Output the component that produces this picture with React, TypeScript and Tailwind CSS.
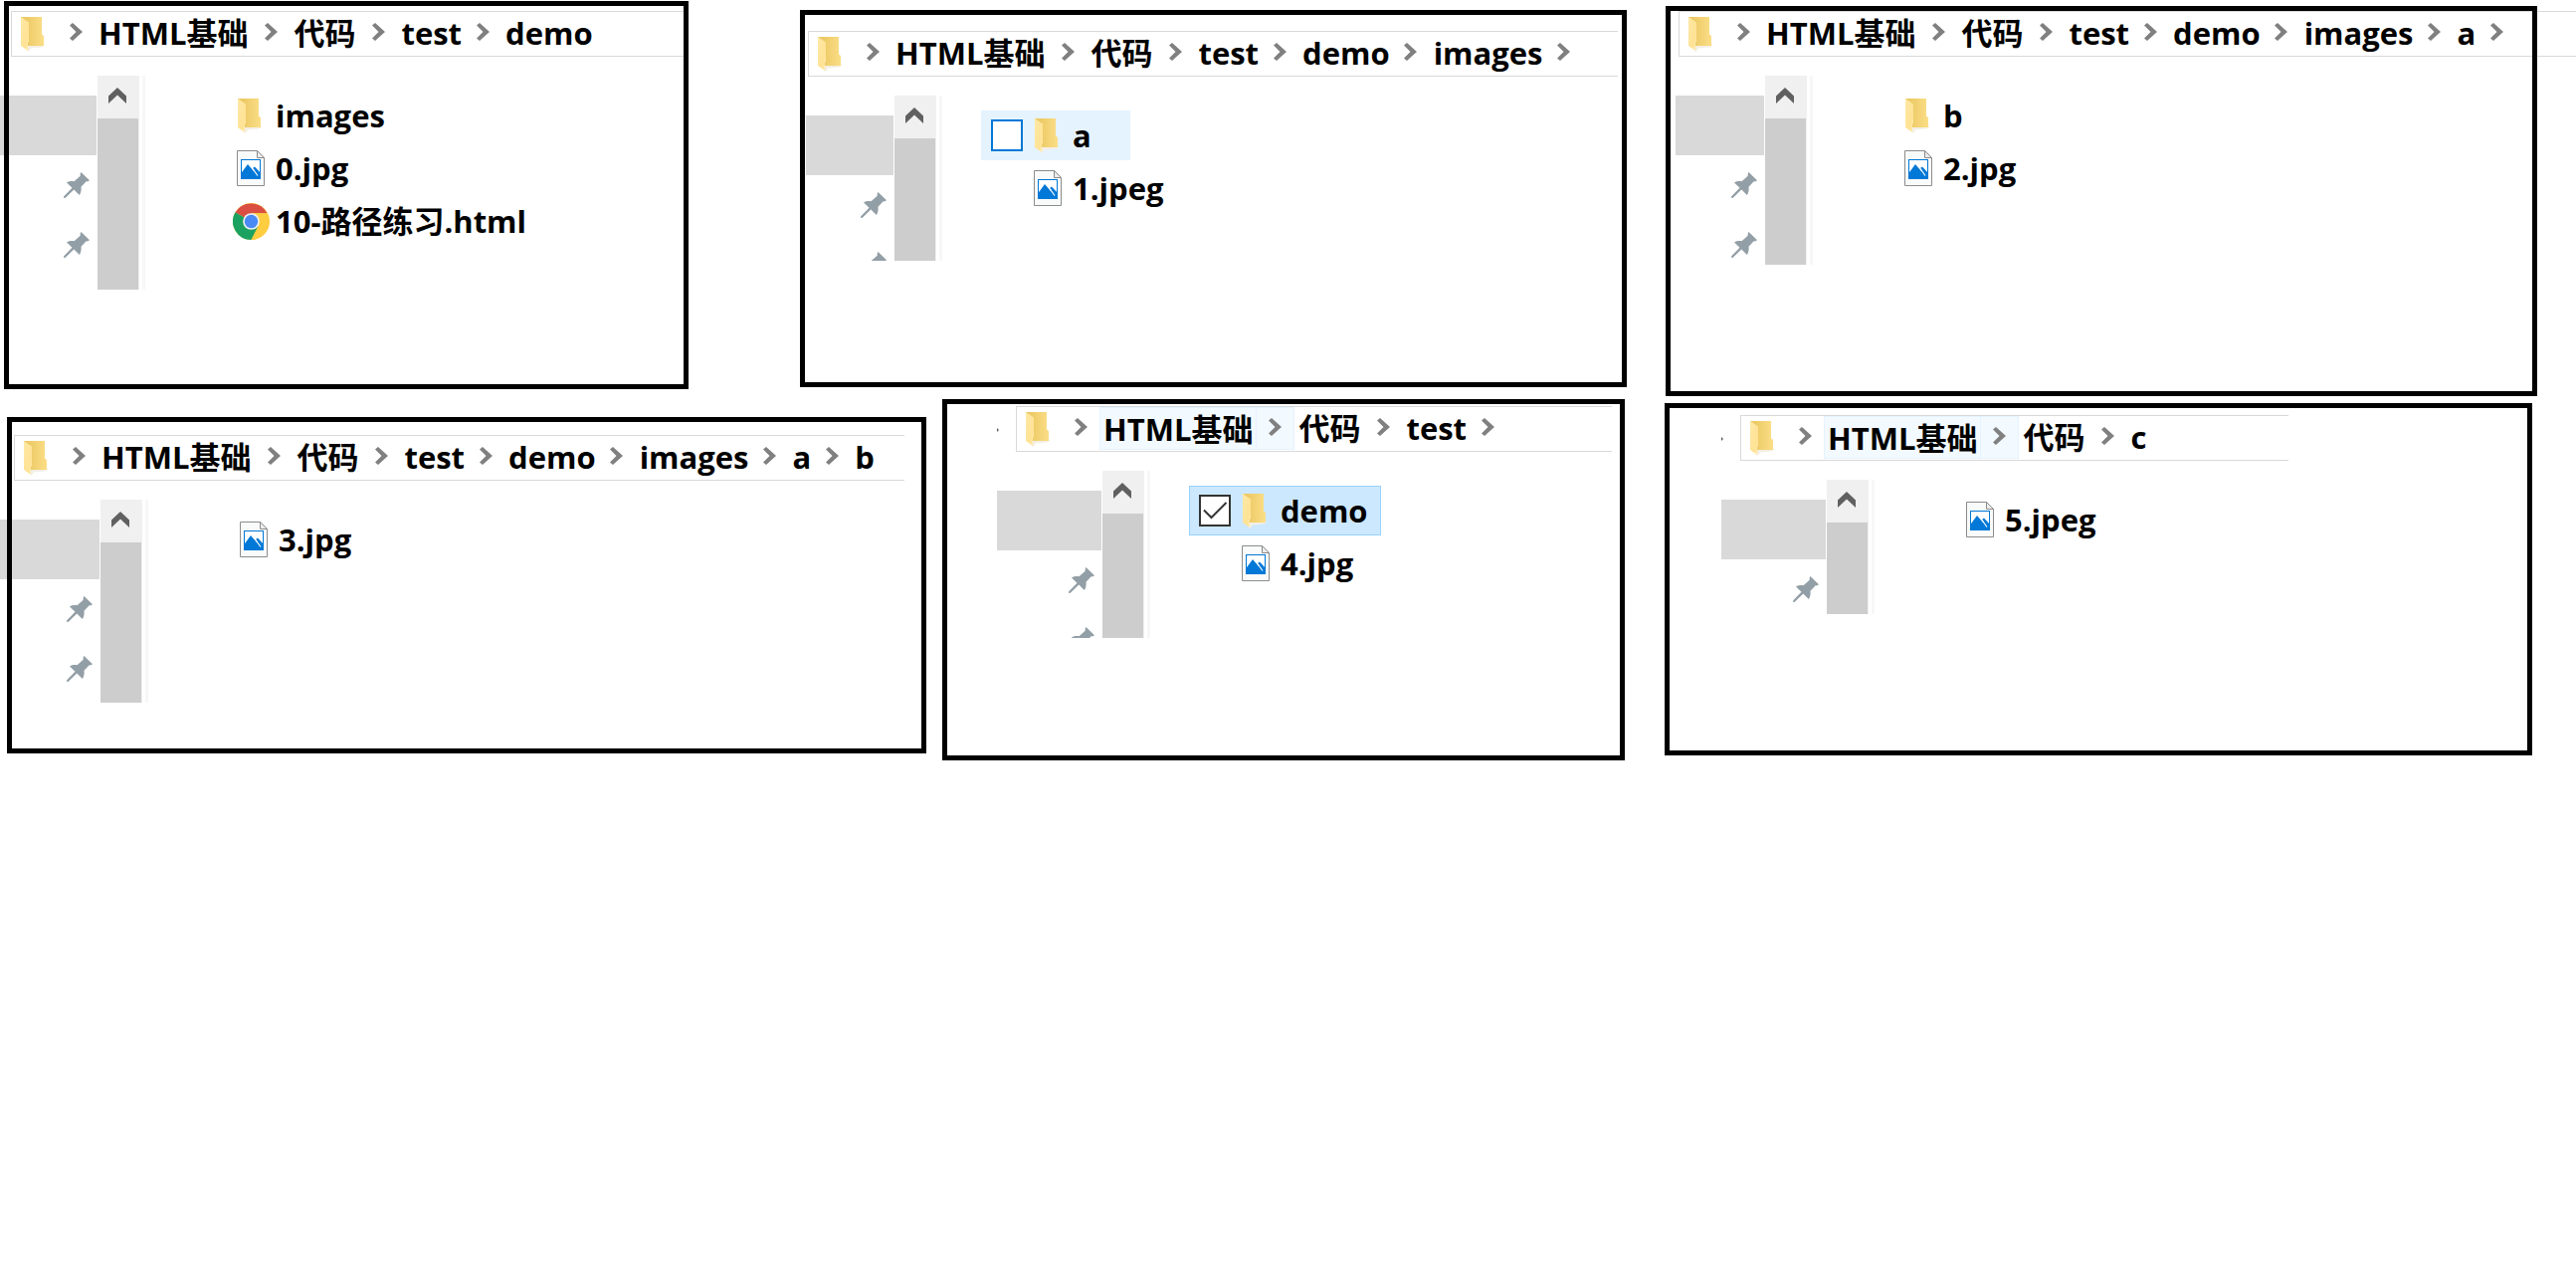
import React from "react";

const FONT =
  "font-['Open_Sans','Noto_Sans_CJK_SC',sans-serif] font-bold text-[31px] leading-[42px] text-black whitespace-nowrap";

type FileKind = "folder" | "image" | "chrome";
type Entry = { name: string; kind: FileKind; state?: "hover" | "selected" };

function FolderIcon() {
  return (
    <svg width="28" height="35" viewBox="-1 0 28 35" className="shrink-0">
      <defs>
        <linearGradient id="folderBack" x1="0" x2="1" y1="0" y2="0">
          <stop offset="0.2" stopColor="#ecc964" />
          <stop offset="1" stopColor="#fbde87" />
        </linearGradient>
        <linearGradient id="folderFlap" x1="0" x2="1" y1="0" y2="1">
          <stop offset="0" stopColor="#ffe9a6" />
          <stop offset="0.7" stopColor="#ffe294" />
          <stop offset="1" stopColor="#fff0bf" />
        </linearGradient>
      </defs>
      <path d="M7 28h18l-4 2.500-11 1-2 3H6z" fill="#f3efe4" />
      <path d="M0 0h21v17.500l2 1.500v10H7L0 20z" fill="url(#folderBack)" />
      <path d="M0 0l8 5.500v19.500l-1 .5v8.500L0 29z" fill="url(#folderFlap)" />
    </svg>
  );
}

function ImageIcon() {
  return (
    <svg width="28" height="36" viewBox="0 0 28 36" className="shrink-0">
      <path d="M.5.500h20l7 7v28H.5z" fill="#f9fafa" stroke="#8c8c8c" />
      <path d="M20.500.500v7h7z" fill="#ececec" stroke="#8c8c8c" />
      <rect x="4.500" y="9.500" width="19" height="19" fill="#fff" stroke="#0078d7" />
      <path d="M4 23.500L11 14l6 7 1-.5-2-2.500 2-1.500 6 6.500v6H4z" fill="#0078d7" />
      <path d="M16 18.500l5 7" stroke="#fff" strokeWidth="1.200" />
    </svg>
  );
}

function ChromeIcon() {
  return (
    <svg width="37" height="37" viewBox="0 0 48 48" className="shrink-0">
      <circle cx="24" cy="24" r="24" fill="#ffcd40" />
      <path d="M24 24L3.200 12A24 24 0 0 1 44.800 13.200H24z" fill="#db4f43" />
      <path d="M3.200 12A24 24 0 0 0 24 48l9.500-18.500L24 24z" fill="#1ba160" />
      <path d="M24 13.200h20.800A24 24 0 0 1 24 48l9.400-18.600z" fill="#ffcd40" />
      <circle cx="24" cy="24" r="10.800" fill="#f1f1f1" />
      <circle cx="24" cy="24" r="8.700" fill="#4a8af4" />
    </svg>
  );
}

function PinIcon() {
  return (
    <svg width="26" height="26" viewBox="0 0 26 26" className="block shrink-0">
      <path
        d="M17.500 0L26 8.300c-1 .9-2 1.300-3.300 1L17.500 14.700c.4 3-.1 6-1.700 8.300L10.300 17.500 1.500 26 0 25.800l.2-1.500L8.500 15.700 3 10.500c2.200-1.300 4.800-1.700 7.500-1.300L16.700 3.700c-.3-1.400.1-2.600.8-3.700z"
        fill="#939fa6"
      />
    </svg>
  );
}

function Chevron() {
  return (
    <svg width="13" height="18" viewBox="0 0 13 18" className="block">
      <path d="M3 0l10 9-10 9-3-2.500L6.500 9 0 2.500z" fill="#808080" />
    </svg>
  );
}

function Separator({ active = false }: { active?: boolean }) {
  return (
    <button
      type="button"
      aria-label="展开"
      className={
        active
          ? "flex h-[43px] w-[38px] shrink-0 items-start justify-center border border-l-0 border-[#e5f3ff] bg-[#f2f9ff] pt-[10px]"
          : "flex h-[43px] w-[38px] shrink-0 items-start justify-center pt-[11px]"
      }
    >
      <Chevron />
    </button>
  );
}

function AddressBar({
  crumbs,
  trailing,
  hot,
  className,
}: {
  crumbs: string[];
  trailing?: boolean;
  hot?: boolean;
  className: string;
}) {
  return (
    <nav className={"flex h-[46px] border border-r-0 border-[#d9d9d9] bg-white " + className}>
      <span className="w-[45px] shrink-0 pt-[5px] pl-2">
        <FolderIcon />
      </span>
      <Separator />
      {crumbs.map((c, i) => (
        <React.Fragment key={c}>
          <a
            href="#"
            className={
              FONT +
              (hot && i === 0
                ? " h-[43px] border border-[#e5f3ff] bg-[#f2f9ff] px-[3px]"
                : i < 2
                  ? " h-[43px] px-1"
                  : " h-[43px] pr-[2px] pl-1")
            }
          >
            {c}
          </a>
          {(i < crumbs.length - 1 || trailing) && <Separator active={hot && i === 0} />}
        </React.Fragment>
      ))}
    </nav>
  );
}

function FileRow({ entry }: { entry: Entry }) {
  const { name, kind, state } = entry;
  return (
    <li
      className={
        state === "selected"
          ? "relative flex h-[50px] items-center bg-[#cce8ff] pr-[13px] pl-12 outline-1 -outline-offset-1 outline-[#99d1ff]"
          : state === "hover"
            ? "relative flex h-[50px] min-w-[150px] items-center bg-[#e5f3ff] pr-[13px] pl-12"
            : "relative flex h-[50px] items-center pr-[13px] pl-12"
      }
    >
      {state && (
        <input
          type="checkbox"
          aria-label={name}
          defaultChecked={state === "selected"}
          className={
            state === "selected"
              ? "absolute top-[9px] left-[10px] size-8 appearance-none border-2 border-[#333] bg-white"
              : "absolute top-[9px] left-[10px] size-8 appearance-none border-2 border-[#0078d7] bg-white"
          }
        />
      )}
      {state === "selected" && (
        <svg width="32" height="32" viewBox="0 0 32 32" className="pointer-events-none absolute top-[9px] left-[10px]">
          <path d="M5 15.500l7.500 7.500L27.500 8" fill="none" stroke="#333" strokeWidth="2" />
        </svg>
      )}
      <span className="flex w-[38px] shrink-0 items-center justify-center">
        {kind === "folder" ? <FolderIcon /> : kind === "image" ? <ImageIcon /> : <ChromeIcon />}
      </span>
      <span className={FONT + " pl-[6px]"}>{name}</span>
    </li>
  );
}

type PanelProps = {
  className: string;
  barClass: string;
  bodyClass: string;
  navClass: string;
  crumbs: string[];
  trailing?: boolean;
  hot?: boolean;
  files: Entry[];
};

function Panel({ className, barClass, bodyClass, navClass, crumbs, trailing, hot, files }: PanelProps) {
  return (
    <section
      className={
        "relative min-w-0 basis-0 after:pointer-events-none after:absolute after:inset-0 after:border-[5px] after:border-black " +
        className
      }
    >
      <AddressBar crumbs={crumbs} trailing={trailing} hot={hot} className={barClass} />
      <div className={"mt-[19px] flex items-start " + bodyClass}>
        {hot && (
          <svg width="2" height="4" viewBox="0 0 2 4" className="absolute -mt-[43px]">
            <path d="M0 0l2 2-2 2z" fill="#606060" />
          </svg>
        )}
        <div className={"flex shrink-0 flex-col items-end self-stretch overflow-hidden pt-5 " + navClass}>
          <div className="h-[60px] w-full shrink-0 bg-[#d9d9d9]" />
          <div className="flex min-h-0 flex-1 flex-col gap-[34px] overflow-hidden pt-[17px] pr-[7px]">
            <PinIcon />
            <PinIcon />
          </div>
        </div>
        <div className="ml-px flex w-[42px] shrink-0 flex-col self-stretch bg-[#f0f0f0]">
          <button type="button" aria-label="向上滚动" className="flex h-[43px] shrink-0 items-start pt-3 pl-[11px]">
            <svg width="18" height="16" viewBox="0 0 18 16">
              <path d="M9 0l9 8.500V16L9 7.500 0 16V8.500z" fill="#606060" />
            </svg>
          </button>
          <div className="w-[41px] flex-1 bg-[#cdcdcd]" />
        </div>
        <div className="ml-[3px] w-[3px] shrink-0 self-stretch bg-[#f7f7f7]" />
        <ul className="mt-[15px] ml-[39px] flex flex-col items-start gap-[3px]">
          {files.map((f) => (
            <FileRow key={f.name} entry={f} />
          ))}
        </ul>
      </div>
    </section>
  );
}

export default function App() {
  return (
    <main className="w-full overflow-x-hidden bg-white">
      <div className="flex items-start pr-[39px] pl-1">
        <Panel
          className="mt-px grow-[688] pt-[10px] pb-[100px]"
          barClass="ml-[7px]"
          bodyClass="-ml-1 h-[215px]"
          navClass="w-[97px]"
          crumbs={["HTML基础", "代码", "test", "demo"]}
          files={[
            { name: "images", kind: "folder" },
            { name: "0.jpg", kind: "image" },
            { name: "10-路径练习.html", kind: "chrome" },
          ]}
        />
        <Panel
          className="mt-[10px] ml-28 grow-[831] pt-[21px] pb-[127px]"
          barClass="ml-2 mr-[9px]"
          bodyClass="ml-[6px] h-[166px]"
          navClass="w-[88px]"
          crumbs={["HTML基础", "代码", "test", "demo", "images"]}
          trailing
          files={[
            { name: "a", kind: "folder", state: "hover" },
            { name: "1.jpeg", kind: "image" },
          ]}
        />
        <Panel
          className="mt-[6px] ml-[39px] grow-[876] pt-[5px] pb-[132px]"
          barClass="ml-[13px] -mr-[39px]"
          bodyClass="ml-[10px] h-[190px]"
          navClass="w-[89px]"
          crumbs={["HTML基础", "代码", "test", "demo", "images", "a"]}
          trailing
          files={[
            { name: "b", kind: "folder" },
            { name: "2.jpg", kind: "image" },
          ]}
        />
      </div>
      <div className="flex items-start pr-[44px] pl-[7px]">
        <Panel
          className="mt-[21px] grow-[924] pt-[18px] pb-[51px]"
          barClass="ml-[7px] mr-[22px]"
          bodyClass="-ml-[7px] h-[204px]"
          navClass="w-[100px]"
          crumbs={["HTML基础", "代码", "test", "demo", "images", "a", "b"]}
          files={[{ name: "3.jpg", kind: "image" }]}
        />
        <Panel
          className="mt-[3px] ml-4 grow-[686] pt-[7px] pb-[123px]"
          barClass="ml-[74px] mr-[13px]"
          bodyClass="ml-[55px] h-[168px]"
          navClass="w-[105px]"
          crumbs={["HTML基础", "代码", "test"]}
          trailing
          hot
          files={[
            { name: "demo", kind: "folder", state: "selected" },
            { name: "4.jpg", kind: "image" },
          ]}
        />
        <Panel
          className="mt-[7px] ml-10 grow-[872] pt-3 pb-[142px]"
          barClass="ml-[76px] mr-[245px]"
          bodyClass="ml-[57px] h-[135px]"
          navClass="w-[105px]"
          crumbs={["HTML基础", "代码", "c"]}
          hot
          files={[{ name: "5.jpeg", kind: "image" }]}
        />
      </div>
    </main>
  );
}
